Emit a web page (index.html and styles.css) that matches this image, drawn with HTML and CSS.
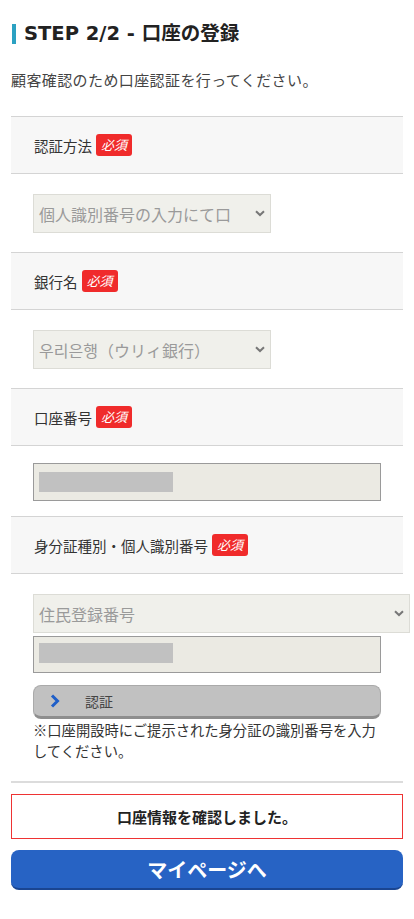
FILE: index.html
```html
<!DOCTYPE html>
<html lang="ja">
<head>
<meta charset="utf-8">
<link rel="stylesheet" href="styles.css">
</head>
<body>
<div class="page">
  <h1 class="title">STEP 2/2 - 口座の登録</h1>
  <p class="lead">顧客確認のため口座認証を行ってください。</p>

  <div class="form">
    <div class="head"><span class="label">認証方法</span><span class="req">必須</span></div>
    <div class="body">
      <div class="select sel-short"><span>個人識別番号の入力にて口</span><svg class="chev" viewBox="0 0 10 7" width="10" height="7"><path d="M1 1.2 L5 5 L9 1.2" fill="none" stroke="#777" stroke-width="2"/></svg></div>
    </div>

    <div class="head"><span class="label">銀行名</span><span class="req">必須</span></div>
    <div class="body">
      <div class="select sel-short"><span>우리은행（ウリィ銀行）</span><svg class="chev" viewBox="0 0 10 7" width="10" height="7"><path d="M1 1.2 L5 5 L9 1.2" fill="none" stroke="#777" stroke-width="2"/></svg></div>
    </div>

    <div class="head"><span class="label">口座番号</span><span class="req">必須</span></div>
    <div class="body body-input">
      <div class="input"><span class="mask"></span></div>
    </div>

    <div class="head"><span class="label">身分証種別・個人識別番号</span><span class="req">必須</span></div>
    <div class="body body-last">
      <div class="select sel-long"><span>住民登録番号</span><svg class="chev" viewBox="0 0 10 7" width="10" height="7"><path d="M1 1.2 L5 5 L9 1.2" fill="none" stroke="#777" stroke-width="2"/></svg></div>
      <div class="input input-tight"><span class="mask"></span></div>
      <div class="auth-btn"><svg class="arrow" viewBox="0 0 10 14" width="10" height="14"><path d="M2 1.5 L7.5 7 L2 12.5" fill="none" stroke="#1f5fc8" stroke-width="3"/></svg><span>認証</span></div>
      <p class="note">※口座開設時にご提示された身分証の識別番号を入力してください。</p>
    </div>
  </div>

  <div class="confirm">口座情報を確認しました。</div>
  <div class="mypage">マイページへ</div>
</div>
</body>
</html>
```

FILE: styles.css
```css
* { box-sizing: border-box; }
html, body { margin: 0; padding: 0; background: #fff; }
body {
  font-family: "Noto Sans CJK JP", "Noto Sans", sans-serif;
  color: #333;
}
.page { padding: 24px 11px 0 11px; }
.title {
  margin: 0 0 0 1px;
  border-left: 4px solid #2ba1c2;
  padding-left: 8px;
  font-family: "DejaVu Sans", "Noto Sans CJK JP", sans-serif;
  font-size: 19.5px;
  font-weight: 700;
  line-height: 20px;
  color: #222;
}
.lead {
  margin: 25px 0 0 0;
  font-size: 15px;
  line-height: 22px;
  letter-spacing: 0.4px;
  color: #444;
}
.form {
  margin-top: 25px;
  border-top: 1px solid #d4d4d4;
}
.head {
  background: #f7f7f7;
  height: 57px;
  padding-left: 23px;
  display: flex;
  align-items: center;
  gap: 4px;
  border-bottom: 1px solid #d4d4d4;
}
.label { font-size: 14.5px; color: #333; }
.req {
  background: #f02b2b;
  color: #fff;
  font-size: 13px;
  line-height: 22px;
  height: 22px;
  padding: 0 5px;
  border-radius: 3px;
  font-style: italic;
}
.body {
  padding: 20px 0 19px 22px;
  border-bottom: 1px solid #d4d4d4;
}
.body-input { padding: 17px 0 15px 22px; }
.body-last { padding: 20px 0 20px 22px; border-bottom: 2px solid #dcdcdc; }
.select {
  height: 39px;
  background: #f0f0eb;
  border: 1px solid #dcdcd6;
  display: flex;
  align-items: center;
  justify-content: space-between;
  padding: 0 5px 0 5px;
  color: #9a9a9a;
  font-size: 16px;
}
.sel-short { width: 238px; }
.sel-long { width: 377px; }
.input {
  width: 348px;
  height: 38px;
  background: #ebeae3;
  border: 1px solid #9a9a9a;
  padding: 8px 0 0 5px;
}
.input-tight { margin-top: 3px; height: 37px; padding-top: 6px; }
.mask {
  display: block;
  width: 134px;
  height: 20px;
  background: #c1c1c1;
}
.auth-btn {
  margin-top: 12px;
  width: 348px;
  height: 34px;
  background: #c1c1c1;
  border: 1px solid #aaa;
  border-bottom: 3px solid #8e8e8e;
  border-radius: 8px;
  display: flex;
  align-items: center;
  padding-left: 16px;
  font-size: 14px;
  color: #444;
}
.auth-btn .arrow { margin-right: 25px; }
.note {
  margin: 0;
  width: 352px;
  font-size: 14.3px;
  line-height: 21px;
  color: #333;
}
.confirm {
  margin-top: 11px;
  height: 45px;
  border: 1px solid #ee3333;
  display: flex;
  align-items: center;
  justify-content: center;
  font-size: 15px;
  font-weight: 700;
  color: #222;
}
.mypage {
  margin-top: 11px;
  height: 40px;
  background: #2763c4;
  border-bottom: 2px solid #1a4591;
  border-radius: 8px;
  color: #fff;
  font-size: 20px;
  font-weight: 700;
  display: flex;
  align-items: center;
  justify-content: center;
}
```
